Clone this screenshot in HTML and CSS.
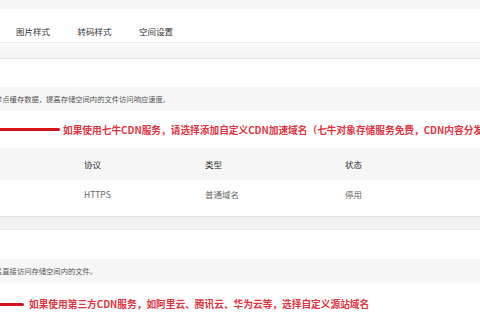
FILE: index.html
```html
<!doctype html>
<html>
    <head>
        <meta name="viewport" content="width=device-width, initial-scale=1.0">
        <title>空间设置</title>
        <link rel="stylesheet" href="styles.css">
    </head>
    <body>
        <div class="page">
            <div class="top-band"></div>
            <div class="tabs">
                <a href="#">图片样式</a>
                <a href="#">转码样式</a>
                <a href="#">空间设置</a>
            </div>
            <div class="gap-band"></div>

            <div class="panel panel-cdn">
                <div class="hint">
                    <span>节点缓存数据，提高存储空间内的文件访问响应速度。</span>
                </div>
                <div class="note note-cdn">
                    <span class="arrow arrow-long"></span>
                    <span class="note-text">如果使用七牛CDN服务，请选择添加自定义CDN加速域名（七牛对象存储服务免费，CDN内容分发网络按量计费）</span>
                </div>
                <div class="table">
                    <div class="row head">
                        <span></span>
                        <span>协议</span>
                        <span>类型</span>
                        <span>状态</span>
                    </div>
                    <div class="row">
                        <span></span>
                        <span>HTTPS</span>
                        <span>普通域名</span>
                        <span>停用</span>
                    </div>
                </div>
            </div>

            <div class="gap-band small"></div>

            <div class="panel panel-source">
                <div class="hint">
                    <span>名直接访问存储空间内的文件。</span>
                </div>
                <div class="note note-source">
                    <span class="arrow arrow-short"></span>
                    <span class="note-text">如果使用第三方CDN服务，如阿里云、腾讯云、华为云等，选择自定义源站域名</span>
                </div>
            </div>
        </div>
    </body>
</html>
```

FILE: styles.css
```css
body {
    margin: 0;
    padding: 0;
    background-color: #fff;
    font-family: "Noto Sans CJK SC", "Noto Sans", sans-serif;
    color: #333;
}

.page {
    width: 480px;
    height: 320px;
    overflow: hidden;
}

.top-band {
    height: 9px;
    background-color: #f6f6f6;
}

.tabs {
    display: flex;
    gap: 27.5px;
    height: 34px;
    box-sizing: border-box;
    padding: 10px 0 0 16px;
    background-color: #fff;
    border-bottom: 1px solid #ededed;
}

.tabs a {
    width: 34px;
    line-height: 24px;
    font-size: 8.5px;
    color: #333;
    text-decoration: none;
    white-space: nowrap;
}

.gap-band {
    height: 15px;
    background: linear-gradient(#fbfbfb, #f3f3f3);
    border-bottom: 1px solid #e9e9e9;
}

.gap-band.small {
    height: 12px;
    border-top: 1px solid #e4e4e4;
    background: linear-gradient(#f1f1f1, #f4f4f4);
    border-bottom: 1px solid #ececec;
}

.panel {
    background-color: #fff;
}

.panel-cdn {
    padding-top: 28px;
}

.panel-source {
    padding-top: 29px;
}

.hint {
    height: 24px;
    line-height: 24px;
    background-color: #f7f7f7;
    font-size: 7.3px;
    color: #555;
    white-space: nowrap;
    overflow: hidden;
}

.hint span {
    display: block;
    margin-left: -5px;
}

.note {
    display: flex;
    align-items: center;
    white-space: nowrap;
}

.note-cdn {
    height: 37px;
}

.note-source {
    height: 42px;
    padding-bottom: 1px;
}

.arrow {
    height: 3px;
    background-color: #d3141d;
    border-radius: 0 2px 2px 0;
    flex-shrink: 0;
}

.arrow-long {
    width: 60px;
    margin-right: 3px;
}

.arrow-short {
    width: 24px;
    margin-right: 5px;
}

.note-text {
    font-size: 9.7px;
    font-weight: bold;
    color: #e2343f;
}

.row {
    display: grid;
    grid-template-columns: 84px 121px 140px 1fr;
    font-size: 8.5px;
    white-space: nowrap;
}

.row.head {
    height: 32px;
    line-height: 32px;
    background-color: #f7f7f7;
    color: #333;
}

.row:not(.head) {
    height: 36px;
    line-height: 29px;
    color: #666;
}
```
